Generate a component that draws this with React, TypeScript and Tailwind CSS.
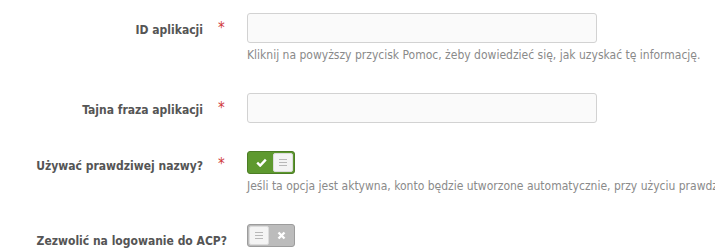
const font = { fontFamily: '"DejaVu Sans Condensed", "DejaVu Sans", sans-serif' }

function Lines() {
  return (
    <svg width="10" height="9" viewBox="0 0 10 9">
      <path d="M1 1.5h8M1 4.5h8M1 7.5h8" stroke="#b8b8b8" strokeWidth="1" />
    </svg>
  )
}

function Handle() {
  return (
    <span className="flex h-[19px] w-[20px] items-center justify-center rounded-[2px] border border-[#dcdcdc] bg-[#f4f4f4]">
      <Lines />
    </span>
  )
}

function Toggle({ on }: { on: boolean }) {
  if (on) {
    return (
      <div className="flex h-[23px] w-[48px] items-center rounded-[3px] border border-[#4c7d25] bg-[#5e992f] p-px">
        <span className="flex flex-1 items-center justify-center">
          <svg width="11" height="9" viewBox="0 0 11 9">
            <path d="M1.2 4.6l3 3 5.6-6" stroke="#fff" strokeWidth="2.4" fill="none" />
          </svg>
        </span>
        <Handle />
      </div>
    )
  }
  return (
    <div className="flex h-[23px] w-[48px] items-center rounded-[3px] border border-[#9c9c9c] bg-[#bcbcbc] p-px">
      <Handle />
      <span className="flex flex-1 items-center justify-center">
        <svg width="9" height="9" viewBox="0 0 9 9">
          <path d="M1.5 1.5l6 6M7.5 1.5l-6 6" stroke="#fff" strokeWidth="2.4" />
        </svg>
      </span>
    </div>
  )
}

function Row({
  label,
  required,
  children,
  className,
}: {
  label: string
  required?: boolean
  children: React.ReactNode
  className?: string
}) {
  return (
    <div className={`grid grid-cols-[204px_43px_1fr] ${className ?? ''}`}>
      {required ? (
        <>
          <div className="pt-[8px] pr-px text-right text-[12px] font-bold text-[#555]">{label}</div>
          <div className="pl-[14px] pt-[8px] text-[15px] leading-none text-[#d03a3a]">*</div>
        </>
      ) : (
        <div className="col-span-2 pt-[8px] pr-[20px] text-right text-[12px] font-bold text-[#555]">{label}</div>
      )}
      <div>{children}</div>
    </div>
  )
}

function Help({ children }: { children: React.ReactNode }) {
  return <p className="mt-[3px] whitespace-nowrap text-[12px] text-[#8a8a8a]">{children}</p>
}

export default function App() {
  return (
    <div className="h-[251px] w-[715px] overflow-hidden bg-white" style={font}>
      <Row label="ID aplikacji" required className="pt-[13px]">
        <div className="h-[30px] w-[350px] rounded-[3px] border border-[#d2d2d2] bg-[#fafafa]" />
        <Help>Kliknij na powyższy przycisk Pomoc, żeby dowiedzieć się, jak uzyskać tę informację.</Help>
      </Row>
      <Row label="Tajna fraza aplikacji" required className="pt-[29px]">
        <div className="h-[30px] w-[350px] rounded-[3px] border border-[#d2d2d2] bg-[#fafafa]" />
      </Row>
      <Row label="Używać prawdziwej nazwy?" required className="pt-[26px]">
        <div className="pt-[2px]">
          <Toggle on />
        </div>
        <Help>Jeśli ta opcja jest aktywna, konto będzie utworzone automatycznie, przy użyciu prawdziwej nazwy.</Help>
      </Row>
      <Row label="Zezwolić na logowanie do ACP?" className="pt-[29px]">
        <Toggle on={false} />
      </Row>
    </div>
  )
}
